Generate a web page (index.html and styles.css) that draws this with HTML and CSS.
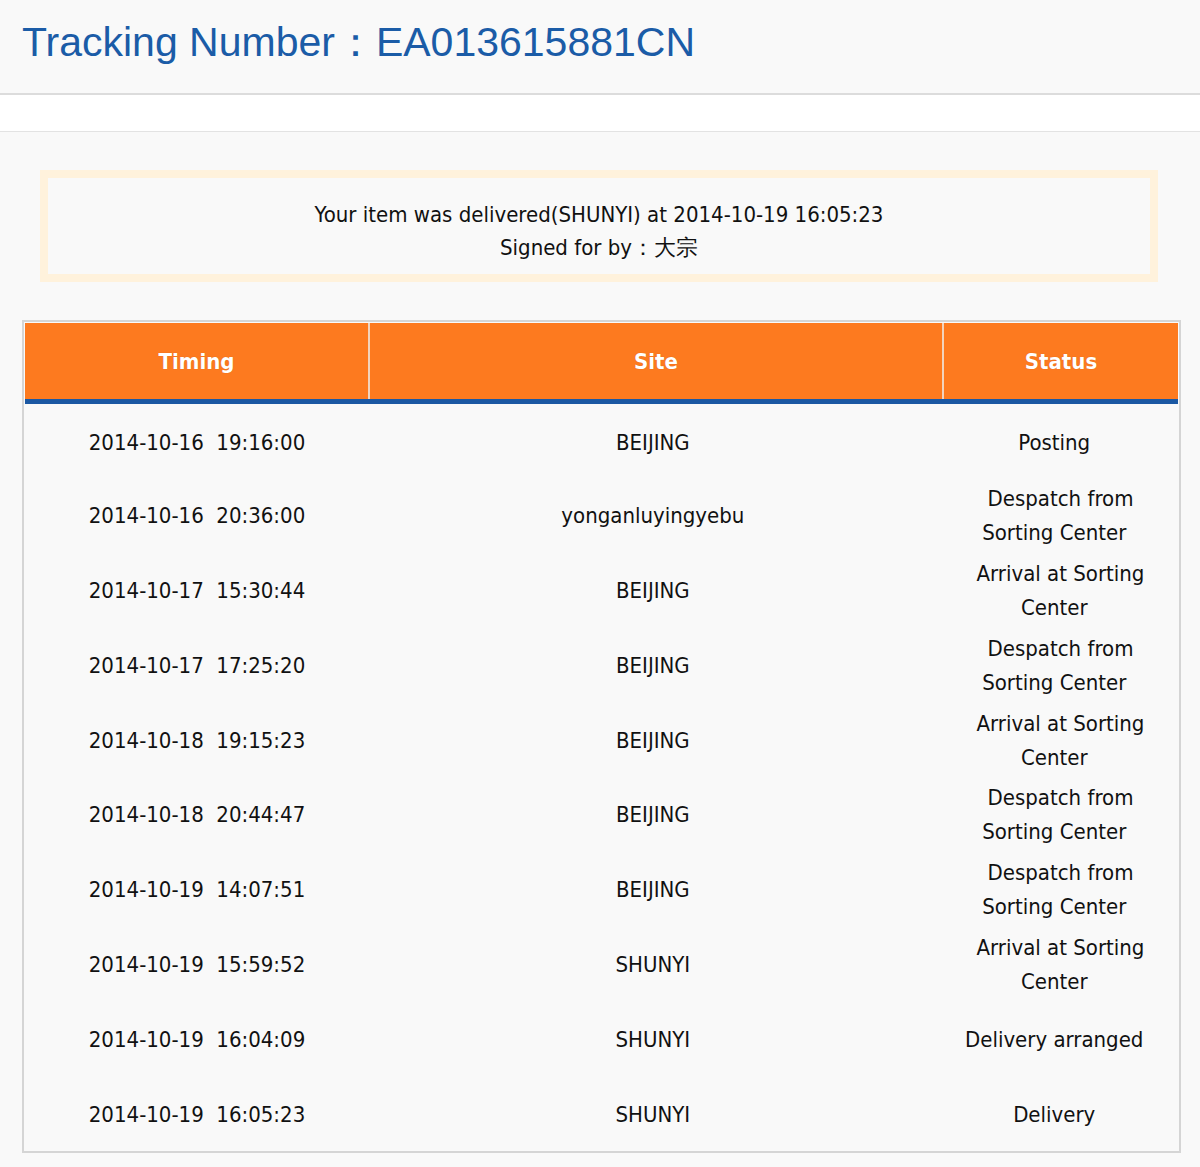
FILE: index.html
```html
<!DOCTYPE html>
<html>
<head>
<meta charset="utf-8">
<link rel="stylesheet" href="styles.css">
</head>
<body>
<header class="top">
  <h1 class="title">Tracking Number：EA013615881CN</h1>
</header>
<div class="band"></div>
<main class="main">
  <div class="notice">
    <div>Your item was delivered(SHUNYI) at 2014-10-19 16:05:23</div>
    <div>Signed for by：大宗</div>
  </div>
  <div class="tablewrap">
    <table class="track">
      <colgroup>
        <col class="c-time">
        <col class="c-site">
        <col class="c-status">
      </colgroup>
      <thead>
        <tr><th>Timing</th><th>Site</th><th>Status</th></tr>
      </thead>
      <tbody>
        <tr><td>2014-10-16&nbsp;&nbsp;19:16:00</td><td>BEIJING&nbsp;</td><td>Posting&nbsp;&nbsp;</td></tr>
        <tr><td>2014-10-16&nbsp;&nbsp;20:36:00</td><td>yonganluyingyebu&nbsp;</td><td>Despatch from Sorting Center&nbsp;&nbsp;</td></tr>
        <tr><td>2014-10-17&nbsp;&nbsp;15:30:44</td><td>BEIJING&nbsp;</td><td>Arrival at Sorting Center&nbsp;&nbsp;</td></tr>
        <tr><td>2014-10-17&nbsp;&nbsp;17:25:20</td><td>BEIJING&nbsp;</td><td>Despatch from Sorting Center&nbsp;&nbsp;</td></tr>
        <tr><td>2014-10-18&nbsp;&nbsp;19:15:23</td><td>BEIJING&nbsp;</td><td>Arrival at Sorting Center&nbsp;&nbsp;</td></tr>
        <tr><td>2014-10-18&nbsp;&nbsp;20:44:47</td><td>BEIJING&nbsp;</td><td>Despatch from Sorting Center&nbsp;&nbsp;</td></tr>
        <tr><td>2014-10-19&nbsp;&nbsp;14:07:51</td><td>BEIJING&nbsp;</td><td>Despatch from Sorting Center&nbsp;&nbsp;</td></tr>
        <tr><td>2014-10-19&nbsp;&nbsp;15:59:52</td><td>SHUNYI&nbsp;</td><td>Arrival at Sorting Center&nbsp;&nbsp;</td></tr>
        <tr><td>2014-10-19&nbsp;&nbsp;16:04:09</td><td>SHUNYI&nbsp;</td><td>Delivery arranged&nbsp;&nbsp;</td></tr>
        <tr><td>2014-10-19&nbsp;&nbsp;16:05:23</td><td>SHUNYI&nbsp;</td><td>Delivery&nbsp;&nbsp;</td></tr>
      </tbody>
    </table>
  </div>
</main>
</body>
</html>
```

FILE: styles.css
```css
html, body {
  margin: 0;
  padding: 0;
}
body {
  background: #f9f9f9;
  font-family: "DejaVu Sans Condensed", "DejaVu Sans", "Liberation Sans", sans-serif;
  color: #111;
}
.top {
  height: 93px;
  border-bottom: 2px solid #dcdcdc;
  padding-left: 22px;
  display: flex;
  align-items: center;
}
.title {
  margin: 0;
  font-family: "Liberation Sans", Arial, sans-serif;
  font-weight: normal;
  font-size: 41px;
  color: #1b5ca7;
  position: relative;
  top: -4px;
}
.band {
  height: 36px;
  background: #ffffff;
  border-bottom: 1px solid #e3e3e3;
}
.main {
  padding: 38px 19px 20px 22px;
}
.notice {
  margin: 0 23px 0 18px;
  border: 8px solid #fff2dc;
  background: #f9f9f9;
  padding: 20px 0 10px;
  text-align: center;
  font-size: 22px;
  line-height: 33px;
}
.tablewrap {
  margin-top: 38px;
  border: 2px solid #d5d5d5;
  padding: 1px 1px 2px 1px;
}
.track {
  width: 100%;
  border-collapse: collapse;
  table-layout: fixed;
}
.c-time { width: 344px; }
.c-site { width: 574px; }
.c-status { width: auto; }
.track th {
  background: #fd7a1f;
  color: #fff;
  font-weight: bold;
  font-size: 22px;
  height: 76px;
  padding: 0;
  border-bottom: 5px solid #1b58a3;
  text-shadow: 0 0 1px rgba(120, 50, 0, 0.35);
}
.track th + th {
  border-left: 2px solid #f2d3bd;
}
.track td {
  height: 74.8px;
  padding: 5px 10px 0;
  text-align: center;
  font-size: 22px;
  line-height: 34px;
  box-sizing: border-box;
}
```
